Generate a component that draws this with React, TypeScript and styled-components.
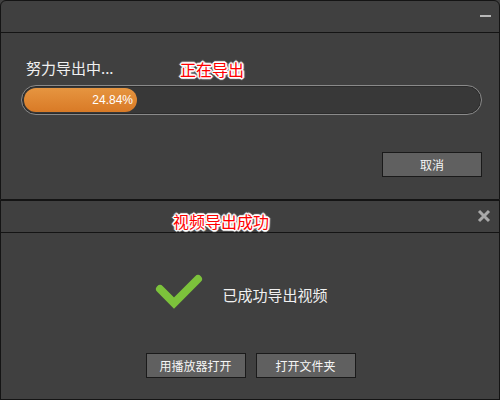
import React from 'react';
import styled, { createGlobalStyle } from 'styled-components';

const GlobalStyle = createGlobalStyle`
	html, body {
		margin: 0;
		padding: 0;
		background: #404040;
	}
	body {
		font-family: "Noto Sans CJK SC", "Liberation Sans", sans-serif;
		color: #f2f2f2;
	}
`;

const Page = styled.div`
	width: 500px;
	height: 400px;
	display: flex;
	flex-direction: column;
	overflow: hidden;
`;

const Window = styled.div<{ $rounded?: boolean }>`
	position: relative;
	height: 200px;
	box-sizing: border-box;
	border: 1px solid #141414;
	border-radius: ${(p) => (p.$rounded ? '6px 6px 0 0' : '0')};
	background: #404040;
	display: flex;
	flex-direction: column;
`;

const TitleBar = styled.div`
	height: 31px;
	flex-shrink: 0;
	border-bottom: 1px solid #141414;
	display: flex;
	align-items: center;
	justify-content: flex-end;
	padding-right: 8px;
`;

const MinimizeIcon = styled.span`
	width: 11px;
	height: 2px;
	background: #b8b8b8;
	margin-top: -1px;
`;

const CloseIcon = styled.svg`
	width: 14px;
	height: 14px;
	margin-top: -2px;
`;

const Body = styled.div`
	flex: 1;
	display: flex;
	flex-direction: column;
	padding: 0 17px 0 20px;
`;

const Label = styled.div`
	font-size: 15px;
	line-height: 20px;
	margin: 25px 0 0 5px;
	color: #f0f0f0;
`;

const Track = styled.div`
	margin-top: 7px;
	height: 30px;
	box-sizing: border-box;
	border: 1px solid #8a8a8a;
	border-radius: 15px;
	background: #383838;
	box-shadow: inset 0 0 0 1px #2c2c2c;
	padding: 2px;
	display: flex;
`;

const Fill = styled.div`
	height: 24px;
	border-radius: 12px;
	background: linear-gradient(#e69540, #d97a26);
	display: flex;
	align-items: center;
	justify-content: flex-end;
	padding-right: 4px;
	box-sizing: border-box;
	font-family: "Liberation Sans", Arial, sans-serif;
	font-size: 12px;
	color: #ffffff;
`;

const ActionRow = styled.div<{ $center?: boolean }>`
	display: flex;
	justify-content: ${(p) => (p.$center ? 'center' : 'flex-end')};
	gap: 10px;
	margin-top: ${(p) => (p.$center ? '42px' : '37px')};
	padding-right: ${(p) => (p.$center ? '2px' : '0')};
`;

const Button = styled.button`
	width: 100px;
	height: 25px;
	box-sizing: border-box;
	border: 1px solid #1a1a1a;
	background: #606060;
	color: #f5f5f5;
	font-family: "Noto Sans CJK SC", sans-serif;
	font-size: 12px;
	padding: 0;
	cursor: pointer;
`;

const ResultRow = styled.div`
	margin-top: 38px;
	display: flex;
	align-items: center;
	justify-content: center;
	gap: 19px;
	padding-right: 20px;
	height: 40px;
`;

const ResultText = styled.span`
	font-size: 15px;
	color: #f0f0f0;
	margin-top: 6px;
`;

const Annotation = styled.span<{ $x: number; $y: number }>`
	position: absolute;
	left: ${(p) => p.$x}px;
	top: ${(p) => p.$y}px;
	font-size: 16px;
	line-height: 20px;
	color: #ff0000;
	text-shadow:
		1px 0 0 #fff, -1px 0 0 #fff, 0 1px 0 #fff, 0 -1px 0 #fff,
		1px 1px 0 #fff, -1px -1px 0 #fff, 1px -1px 0 #fff, -1px 1px 0 #fff,
		2px 0 1px #fff, -2px 0 1px #fff, 0 2px 1px #fff, 0 -2px 1px #fff;
`;

const CheckMark = () => (
	<svg width="48" height="40" viewBox="0 0 48 40">
		<path
			d="M5 18 L19 32 L43 8"
			fill="none"
			stroke="#7cc23b"
			strokeWidth="8"
			strokeLinecap="round"
			strokeLinejoin="miter"
		/>
	</svg>
);

export default function App() {
	const progress = 24.84;
	return (
		<Page>
			<GlobalStyle />
			<Window $rounded>
				<TitleBar>
					<MinimizeIcon />
				</TitleBar>
				<Body>
					<Label>努力导出中...</Label>
					<Track>
						<Fill style={{ width: `${progress}%` }}>{progress}%</Fill>
					</Track>
					<ActionRow>
						<Button>取消</Button>
					</ActionRow>
				</Body>
				<Annotation $x={179} $y={58}>正在导出</Annotation>
			</Window>
			<Window>
				<TitleBar>
					<CloseIcon viewBox="0 0 14 14">
						<path d="M2 2 L12 12 M12 2 L2 12" stroke="#a8a8a8" strokeWidth="3" />
					</CloseIcon>
				</TitleBar>
				<Body>
					<ResultRow>
						<CheckMark />
						<ResultText>已成功导出视频</ResultText>
					</ResultRow>
					<ActionRow $center>
						<Button>用播放器打开</Button>
						<Button>打开文件夹</Button>
					</ActionRow>
				</Body>
				<Annotation $x={172} $y={10}>视频导出成功</Annotation>
			</Window>
		</Page>
	);
}
